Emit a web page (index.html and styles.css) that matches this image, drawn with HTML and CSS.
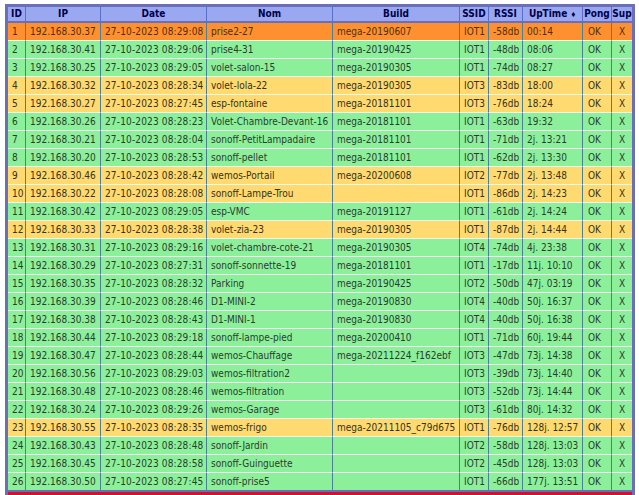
FILE: index.html
```html
<!DOCTYPE html>
<html><head><meta charset="utf-8"><title>Modules</title><link rel="stylesheet" href="styles.css"></head>
<body>
<div class="panel">
<table class="grid">
<colgroup><col class="c1"><col class="c2"><col class="c3"><col class="c4"><col class="c5"><col class="c6"><col class="c7"><col class="c8"><col class="c9"><col class="c10"></colgroup>
<thead><tr><th>ID</th><th>IP</th><th>Date</th><th>Nom</th><th>Build</th><th>SSID</th><th>RSSI</th><th>UpTime <span class="sort">♦</span></th><th>Pong</th><th>Sup</th></tr></thead>
<tbody>
<tr class="o"><td>1</td><td>192.168.30.37</td><td class="d">27-10-2023 08:29:08</td><td>prise2-27</td><td>mega-20190607</td><td>IOT1</td><td>-58db</td><td>00:14</td><td class="k">OK</td><td class="m">X</td></tr>
<tr class="g"><td>2</td><td>192.168.30.41</td><td class="d">27-10-2023 08:29:06</td><td>prise4-31</td><td>mega-20190425</td><td>IOT1</td><td>-48db</td><td>08:06</td><td class="k">OK</td><td class="m">X</td></tr>
<tr class="g"><td>3</td><td>192.168.30.25</td><td class="d">27-10-2023 08:29:05</td><td>volet-salon-15</td><td>mega-20190305</td><td>IOT1</td><td>-74db</td><td>08:27</td><td class="k">OK</td><td class="m">X</td></tr>
<tr class="y"><td>4</td><td>192.168.30.32</td><td class="d">27-10-2023 08:28:34</td><td>volet-lola-22</td><td>mega-20190305</td><td>IOT3</td><td>-83db</td><td>18:00</td><td class="k">OK</td><td class="m">X</td></tr>
<tr class="y"><td>5</td><td>192.168.30.27</td><td class="d">27-10-2023 08:27:45</td><td>esp-fontaine</td><td>mega-20181101</td><td>IOT3</td><td>-76db</td><td>18:24</td><td class="k">OK</td><td class="m">X</td></tr>
<tr class="g"><td>6</td><td>192.168.30.26</td><td class="d">27-10-2023 08:28:23</td><td>Volet-Chambre-Devant-16</td><td>mega-20181101</td><td>IOT1</td><td>-63db</td><td>19:32</td><td class="k">OK</td><td class="m">X</td></tr>
<tr class="g"><td>7</td><td>192.168.30.21</td><td class="d">27-10-2023 08:28:04</td><td>sonoff-PetitLampadaire</td><td>mega-20181101</td><td>IOT1</td><td>-71db</td><td>2j. 13:21</td><td class="k">OK</td><td class="m">X</td></tr>
<tr class="g"><td>8</td><td>192.168.30.20</td><td class="d">27-10-2023 08:28:53</td><td>sonoff-pellet</td><td>mega-20181101</td><td>IOT1</td><td>-62db</td><td>2j. 13:30</td><td class="k">OK</td><td class="m">X</td></tr>
<tr class="y"><td>9</td><td>192.168.30.46</td><td class="d">27-10-2023 08:28:42</td><td>wemos-Portail</td><td>mega-20200608</td><td>IOT2</td><td>-77db</td><td>2j. 13:48</td><td class="k">OK</td><td class="m">X</td></tr>
<tr class="y"><td>10</td><td>192.168.30.22</td><td class="d">27-10-2023 08:28:08</td><td>sonoff-Lampe-Trou</td><td></td><td>IOT1</td><td>-86db</td><td>2j. 14:23</td><td class="k">OK</td><td class="m">X</td></tr>
<tr class="g"><td>11</td><td>192.168.30.42</td><td class="d">27-10-2023 08:29:05</td><td>esp-VMC</td><td>mega-20191127</td><td>IOT1</td><td>-61db</td><td>2j. 14:24</td><td class="k">OK</td><td class="m">X</td></tr>
<tr class="y"><td>12</td><td>192.168.30.33</td><td class="d">27-10-2023 08:28:38</td><td>volet-zia-23</td><td>mega-20190305</td><td>IOT1</td><td>-87db</td><td>2j. 14:44</td><td class="k">OK</td><td class="m">X</td></tr>
<tr class="g"><td>13</td><td>192.168.30.31</td><td class="d">27-10-2023 08:29:16</td><td>volet-chambre-cote-21</td><td>mega-20190305</td><td>IOT4</td><td>-74db</td><td>4j. 23:38</td><td class="k">OK</td><td class="m">X</td></tr>
<tr class="g"><td>14</td><td>192.168.30.29</td><td class="d">27-10-2023 08:27:31</td><td>sonoff-sonnette-19</td><td>mega-20181101</td><td>IOT1</td><td>-17db</td><td>11j. 10:10</td><td class="k">OK</td><td class="m">X</td></tr>
<tr class="g"><td>15</td><td>192.168.30.35</td><td class="d">27-10-2023 08:28:32</td><td>Parking</td><td>mega-20190425</td><td>IOT2</td><td>-50db</td><td>47j. 03:19</td><td class="k">OK</td><td class="m">X</td></tr>
<tr class="g"><td>16</td><td>192.168.30.39</td><td class="d">27-10-2023 08:28:46</td><td>D1-MINI-2</td><td>mega-20190830</td><td>IOT4</td><td>-40db</td><td>50j. 16:37</td><td class="k">OK</td><td class="m">X</td></tr>
<tr class="g"><td>17</td><td>192.168.30.38</td><td class="d">27-10-2023 08:28:43</td><td>D1-MINI-1</td><td>mega-20190830</td><td>IOT4</td><td>-40db</td><td>50j. 16:38</td><td class="k">OK</td><td class="m">X</td></tr>
<tr class="g"><td>18</td><td>192.168.30.44</td><td class="d">27-10-2023 08:29:18</td><td>sonoff-lampe-pied</td><td>mega-20200410</td><td>IOT1</td><td>-71db</td><td>60j. 19:44</td><td class="k">OK</td><td class="m">X</td></tr>
<tr class="g"><td>19</td><td>192.168.30.47</td><td class="d">27-10-2023 08:28:44</td><td>wemos-Chauffage</td><td>mega-20211224_f162ebf</td><td>IOT3</td><td>-47db</td><td>73j. 14:38</td><td class="k">OK</td><td class="m">X</td></tr>
<tr class="g"><td>20</td><td>192.168.30.56</td><td class="d">27-10-2023 08:29:03</td><td>wemos-filtration2</td><td></td><td>IOT3</td><td>-39db</td><td>73j. 14:40</td><td class="k">OK</td><td class="m">X</td></tr>
<tr class="g"><td>21</td><td>192.168.30.48</td><td class="d">27-10-2023 08:28:46</td><td>wemos-filtration</td><td></td><td>IOT3</td><td>-52db</td><td>73j. 14:44</td><td class="k">OK</td><td class="m">X</td></tr>
<tr class="g"><td>22</td><td>192.168.30.24</td><td class="d">27-10-2023 08:29:26</td><td>wemos-Garage</td><td></td><td>IOT3</td><td>-61db</td><td>80j. 14:32</td><td class="k">OK</td><td class="m">X</td></tr>
<tr class="y"><td>23</td><td>192.168.30.55</td><td class="d">27-10-2023 08:28:35</td><td>wemos-frigo</td><td>mega-20211105_c79d675</td><td>IOT1</td><td>-76db</td><td>128j. 12:57</td><td class="k">OK</td><td class="m">X</td></tr>
<tr class="g"><td>24</td><td>192.168.30.43</td><td class="d">27-10-2023 08:28:48</td><td>sonoff-Jardin</td><td></td><td>IOT2</td><td>-58db</td><td>128j. 13:03</td><td class="k">OK</td><td class="m">X</td></tr>
<tr class="g"><td>25</td><td>192.168.30.45</td><td class="d">27-10-2023 08:28:58</td><td>sonoff-Guinguette</td><td></td><td>IOT2</td><td>-45db</td><td>128j. 13:03</td><td class="k">OK</td><td class="m">X</td></tr>
<tr class="g"><td>26</td><td>192.168.30.50</td><td class="d">27-10-2023 08:27:45</td><td>sonoff-prise5</td><td></td><td>IOT1</td><td>-66db</td><td>177j. 13:51</td><td class="k">OK</td><td class="m">X</td></tr>
</tbody></table>
<div class="redbar"></div>
</div>
</body></html>
```
FILE: styles.css
```css
html,body{margin:0;padding:0;background:#fff;overflow:hidden}
body{height:495px;padding:4px 0 0 5px;box-sizing:border-box;font-family:"DejaVu Sans Condensed","DejaVu Sans",sans-serif;font-size:10px;color:#2c3a32}
.panel{width:630px;height:491px;background:#6a6fb8;padding:3px 3px 0 3px;box-sizing:border-box}
.grid{border-collapse:separate;border-spacing:0;table-layout:fixed;width:624px}
.c1{width:17px}.c2{width:75px}.c3{width:106px}.c4{width:126px}.c5{width:127px}.c6{width:29px}.c7{width:34px}.c8{width:60px}.c9{width:29px}.c10{width:21px}
th{box-sizing:border-box;height:16px;padding:0 0 2px;background:#99a8f0;color:#000048;font-weight:bold;border-left:1px solid #5a70c8;border-bottom:2px solid #6a6fb8;text-align:center}
td{box-sizing:border-box;height:18px;padding:0 0 0 4px;border-left:1px solid #4a7f96;border-bottom:1px solid #eef8ee;white-space:nowrap;overflow:hidden}
tr td:first-child,tr th:first-child{border-left:0}
tbody tr:last-child td{height:17px;border-bottom:0}
td.m{text-align:center;padding:0}
td.k{padding-left:5px}
td.d{letter-spacing:.15px;padding-left:4px}
.sort{font-size:7px}
.o td{background:#ff9030;color:#4a3008}
.g td{background:#8cf09a}
.y td{background:#ffda70;color:#34321a}
.redbar{height:3px;margin-top:2px;background:#d0122c}
```
